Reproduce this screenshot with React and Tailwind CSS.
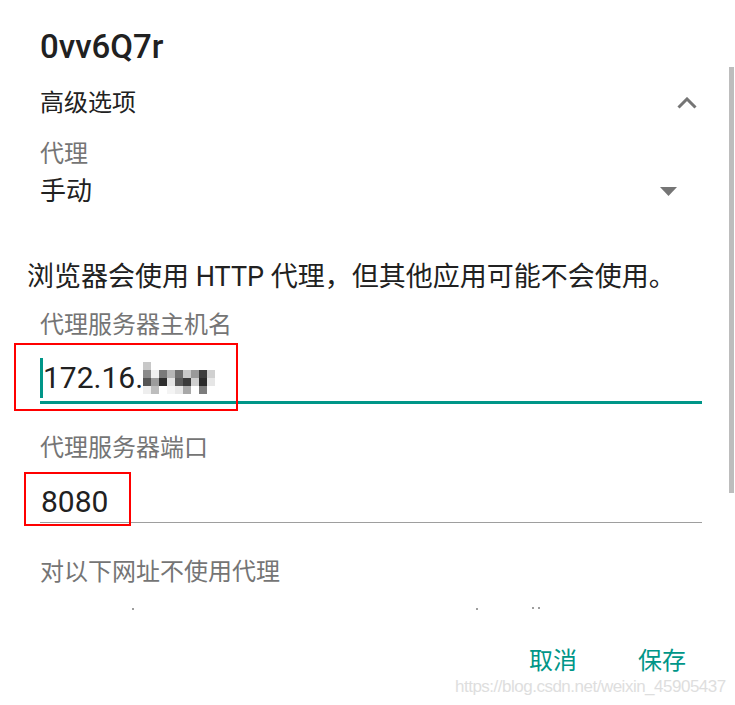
import React from 'react';

const mosaic = [
  ['#c8c8c8', '#ffffff', '#ffffff', '#ffffff', '#ffffff', '#ffffff', '#ffffff', '#ffffff', '#ffffff'],
  ['#8a8a8a', '#f0f0f0', '#7a7a7a', '#b5b5b5', '#6e6e6e', '#c9c9c9', '#9a9a9a', '#3c3c3c', '#d0d0d0'],
  ['#555555', '#9c9c9c', '#2e2e2e', '#e4e4e4', '#5a5a5a', '#3a3a3a', '#cfcfcf', '#2a2a2a', '#e6e6e6'],
  ['#eeeeee', '#bdbdbd', '#ffffff', '#f4f4f4', '#e8e8e8', '#a8a8a8', '#ffffff', '#7c7c7c', '#ffffff'],
];

function Mosaic() {
  return (
    <svg width="72" height="32" viewBox="0 0 72 32" className="inline-block">
      {mosaic.map((row, r) =>
        row.map((c, i) => <rect key={r + '-' + i} x={i * 8} y={r * 8} width="8" height="8" fill={c} />)
      )}
    </svg>
  );
}

export default function App() {
  return (
    <div className="relative w-[735px] h-[705px] overflow-hidden bg-white text-[#212121] font-['Roboto','Noto_Sans_CJK_SC',sans-serif]">
      <div className="flex flex-col">
        {/* Title */}
        <div className="pl-[40px] pt-[27px] h-[67px] text-[33px] leading-[40px] font-medium">0vv6Q7r</div>

        {/* Advanced options header */}
        <div className="mt-[20px] pl-[40px] pr-[38px] flex items-center justify-between h-[32px]">
          <span className="text-[24px] leading-[32px]">高级选项</span>
          <svg width="20" height="12" viewBox="0 0 20 12">
            <polyline points="1.5,10.5 10,2 18.5,10.5" fill="none" stroke="#757575" strokeWidth="3" />
          </svg>
        </div>

        {/* Proxy select */}
        <div className="mt-[19px] pl-[40px] text-[24px] leading-[32px] text-[#757575]">代理</div>
        <div className="mt-[4px] pl-[40px] pr-[58px] flex items-center justify-between h-[34px]">
          <span className="text-[26px] leading-[34px]">手动</span>
          <svg width="17" height="9" viewBox="0 0 17 9">
            <polygon points="0,0 17,0 8.5,9" fill="#757575" />
          </svg>
        </div>

        {/* Notice */}
        <div className="mt-[51px] pl-[27px] text-[27px] leading-[36px] whitespace-nowrap">
          浏览器会使用 HTTP 代理，但其他应用可能不会使用。
        </div>

        {/* Hostname */}
        <div className="mt-[14px] pl-[40px] text-[24px] leading-[32px] text-[#757575]">代理服务器主机名</div>
        <div className="mt-[17px] ml-[40px] mr-[33px] pb-[3px] border-b-[3px] border-[#009688]">
          <div className="flex items-center h-[40px] text-[30px] leading-[40px]">
            <span className="inline-block w-[3px] h-[40px] bg-[#009688]" />
            <span>172.16.</span>
            <Mosaic />
          </div>
        </div>

        {/* Port */}
        <div className="mt-[28px] pl-[40px] text-[24px] leading-[32px] text-[#757575]">代理服务器端口</div>
        <div className="mt-[18px] ml-[40px] mr-[33px] border-b border-[#9e9e9e]">
          <div className="h-[40px] text-[30px] leading-[40px] pl-[1px]">8080</div>
        </div>

        {/* Bypass */}
        <div className="mt-[33px] pl-[40px] text-[24px] leading-[32px] text-[#757575]">对以下网址不使用代理</div>
        <div className="relative h-[20px] mt-[10px]">
          <span className="absolute left-[132px] top-[10px] w-[2px] h-[2px] bg-[#9e9e9e]" />
          <span className="absolute left-[476px] top-[10px] w-[2px] h-[2px] bg-[#9e9e9e]" />
          <span className="absolute left-[532px] top-[9px] w-[2px] h-[2px] bg-[#9e9e9e]" />
          <span className="absolute left-[538px] top-[9px] w-[2px] h-[2px] bg-[#9e9e9e]" />
        </div>

        {/* Actions */}
        <div className="mt-[27px] flex justify-end gap-[61px] pr-[49px] text-[24px] leading-[32px] text-[#009688]">
          <span>取消</span>
          <span>保存</span>
        </div>
      </div>

      {/* Scrollbar */}
      <div className="absolute left-[729px] top-[67px] w-[5px] h-[426px] bg-[#bdbdbd]" />

      {/* Annotation boxes */}
      <div className="absolute left-[14px] top-[343px] w-[224px] h-[68px] border-2 border-[#ff0000]" />
      <div className="absolute left-[24px] top-[472px] w-[107px] h-[54px] border-2 border-[#ff0000]" />

      {/* Watermark */}
      <div className="absolute left-[455px] top-[676px] text-[17px] leading-[22px] text-[#dedede] font-['Liberation_Sans',sans-serif] tracking-[-0.5px]">
        https://blog.csdn.net/weixin_45905437
      </div>
    </div>
  );
}
